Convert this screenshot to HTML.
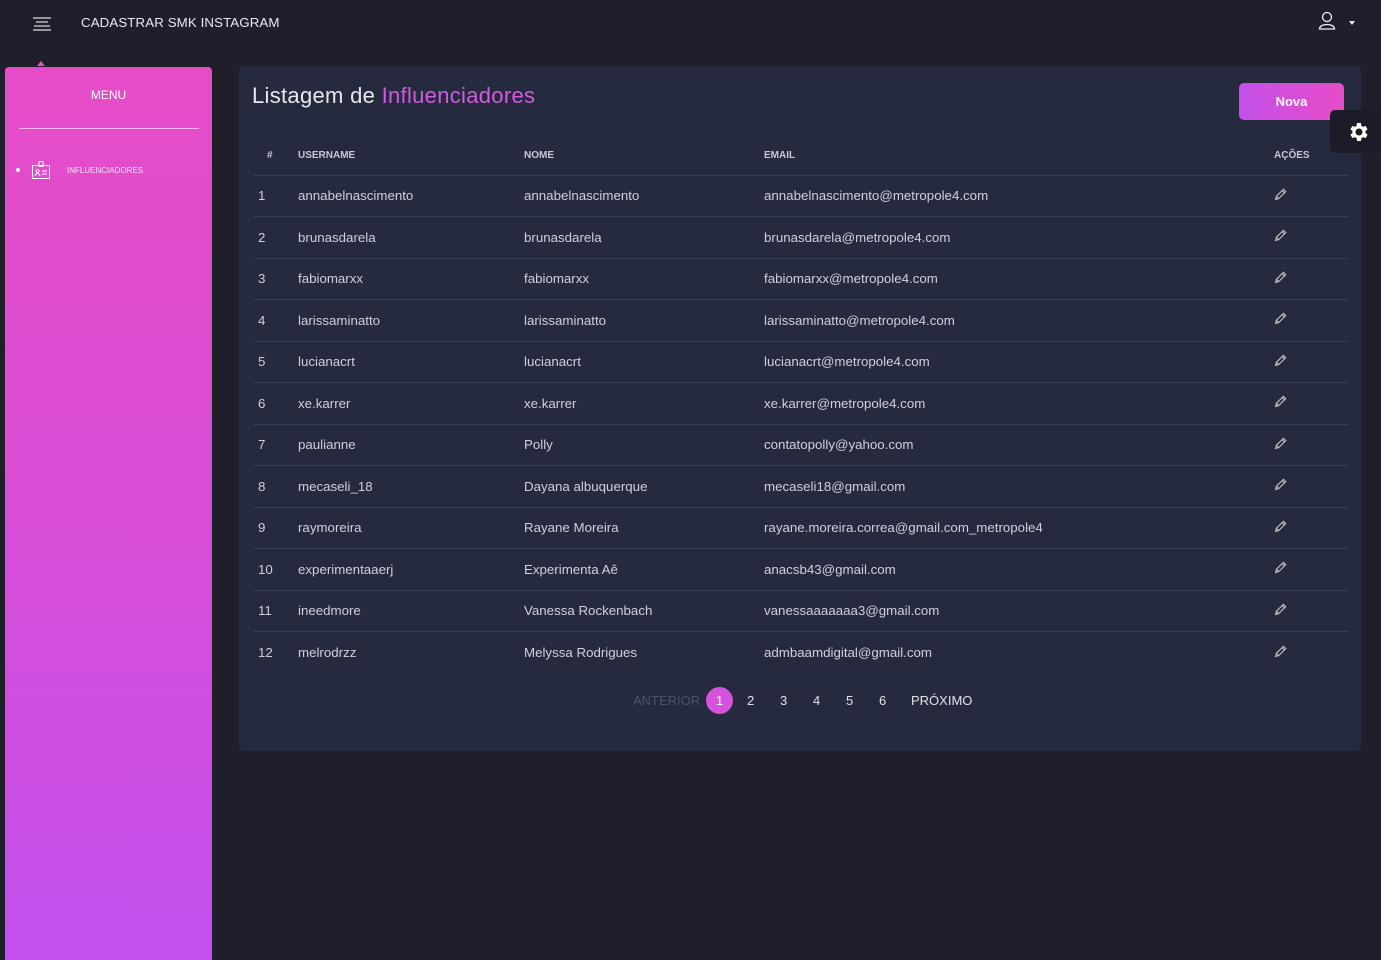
<!DOCTYPE html>
<html><head><meta charset="utf-8"><style>
*{margin:0;padding:0;box-sizing:border-box}
html,body{width:1381px;height:960px;overflow:hidden}
body{background:#1f1f2c;font-family:"Liberation Sans",sans-serif;color:#d8d8e0;position:relative}
.top{position:absolute;left:0;top:0;width:1381px;height:50px}
.title{position:absolute;left:81px;top:15px;font-size:13.3px;color:#e8e8ee;letter-spacing:.1px}
.side{position:absolute;left:5px;top:67px;width:207px;height:893px;border-radius:4px 4px 0 0;background:linear-gradient(180deg,#e64cc7 0%,#d84dd6 50%,#c350ee 100%)}
.side .menu{position:absolute;top:21px;width:100%;text-align:center;font-size:12px;color:#fff}
.side hr{position:absolute;left:14px;top:61px;width:180px;border:0;border-top:1px solid rgba(255,255,255,.6)}
.side .it{position:absolute;left:62px;top:99px;font-size:8px;color:#fff;opacity:.85}
.card{position:absolute;left:239px;top:66px;width:1122px;height:685px;background:#262a3e;border-radius:4px}
h1{position:absolute;left:13px;top:17px;font-weight:normal;font-size:22px;color:#e8e8ee;letter-spacing:.3px}
h1 span{color:#d25ae0}
.btn{position:absolute;left:1000px;top:17px;width:105px;height:37px;border-radius:5px;background:linear-gradient(90deg,#c450ea,#e64cc7);color:#fff;font-weight:bold;font-size:13px;text-align:center;line-height:37px}
.gear{position:absolute;left:1330px;top:110px;width:51px;height:43px;background:#1c1c28;border-radius:5px 0 0 5px}
table{position:absolute;left:14px;top:68px;width:1095px;border-collapse:collapse;font-size:13.3px}
th{height:41px;font-size:10px;font-weight:bold;color:#c8c8d4;text-align:left;border-bottom:1px solid #3a3e52;padding-top:3px}
td{height:41.5px;border-bottom:1px solid #3a3e52;color:#d0d0da}
tr:last-child td{border-bottom:0}
.pg{position:absolute;top:620px;left:0;width:100%;font-size:13px}
.pg span{position:absolute;top:7px;color:#e0e0e8}
</style></head><body>
<div class="top">
<svg style="position:absolute;left:33px;top:17px" width="18" height="15"><g stroke="#ddd" stroke-width="1.2"><line x1="0" y1="1" x2="18" y2="1"/><line x1="3" y1="5" x2="15" y2="5"/><line x1="1" y1="9" x2="17" y2="9"/><line x1="0" y1="13" x2="18" y2="13"/></g></svg>
<div class="title">CADASTRAR SMK INSTAGRAM</div>
<svg style="position:absolute;left:1318px;top:11px" width="18" height="19"><g fill="none" stroke="#eee" stroke-width="1.3"><circle cx="9" cy="6" r="4.5"/><path d="M1.5 18 C1.5 12 16.5 12 16.5 18 Z"/></g></svg>
<div style="position:absolute;left:1349px;top:21px;border:3px solid transparent;border-top:4px solid #eee"></div>
</div>
<div style="position:absolute;left:37px;top:61px;border:4px solid transparent;border-bottom:5px solid #e64cc7;border-top:0"></div>
<div class="side"><div class="menu">MENU</div><hr>
<div style="position:absolute;left:11px;top:101px;width:4px;height:4px;border-radius:50%;background:#fff"></div>
<svg style="position:absolute;left:27px;top:94px" width="18" height="18"><g fill="none" stroke="#fff" stroke-width="1"><rect x="0.5" y="4.5" width="17" height="13"/><rect x="7" y="0.5" width="4" height="5"/><circle cx="5.5" cy="10" r="1.5"/><path d="M3 15c0-3 5-3 5 0"/><line x1="10" y1="10" x2="15" y2="10"/><line x1="10" y1="13" x2="15" y2="13"/></g></svg>
<div class="it">INFLUENCIADORES</div></div>
<svg width="0" height="0" style="position:absolute"><defs><symbol id="p" viewBox="0 0 12 12"><g fill="none" stroke="#bbb" stroke-width="1.1"><path d="M1.5 10.5l.7-2.8 6.5-6.5 2.1 2.1-6.5 6.5z"/><line x1="7.5" y1="2.4" x2="9.6" y2="4.5"/><line x1="2.2" y1="7.7" x2="4.3" y2="9.8"/></g></symbol></defs></svg>
<div class="card">
<h1>Listagem de <span>Influenciadores</span></h1>
<div class="btn">Nova</div>
<table>
<tr><th style="width:45px;padding-left:14px">#</th><th style="width:226px">USERNAME</th><th style="width:240px">NOME</th><th style="width:510px">EMAIL</th><th>AÇÕES</th></tr>
<tr><td style="padding-left:5px">1</td><td>annabelnascimento</td><td>annabelnascimento</td><td>annabelnascimento@metropole4.com</td><td><svg width="13" height="13"><use href="#p"/></svg></td></tr>
<tr><td style="padding-left:5px">2</td><td>brunasdarela</td><td>brunasdarela</td><td>brunasdarela@metropole4.com</td><td><svg width="13" height="13"><use href="#p"/></svg></td></tr>
<tr><td style="padding-left:5px">3</td><td>fabiomarxx</td><td>fabiomarxx</td><td>fabiomarxx@metropole4.com</td><td><svg width="13" height="13"><use href="#p"/></svg></td></tr>
<tr><td style="padding-left:5px">4</td><td>larissaminatto</td><td>larissaminatto</td><td>larissaminatto@metropole4.com</td><td><svg width="13" height="13"><use href="#p"/></svg></td></tr>
<tr><td style="padding-left:5px">5</td><td>lucianacrt</td><td>lucianacrt</td><td>lucianacrt@metropole4.com</td><td><svg width="13" height="13"><use href="#p"/></svg></td></tr>
<tr><td style="padding-left:5px">6</td><td>xe.karrer</td><td>xe.karrer</td><td>xe.karrer@metropole4.com</td><td><svg width="13" height="13"><use href="#p"/></svg></td></tr>
<tr><td style="padding-left:5px">7</td><td>paulianne</td><td>Polly</td><td>contatopolly@yahoo.com</td><td><svg width="13" height="13"><use href="#p"/></svg></td></tr>
<tr><td style="padding-left:5px">8</td><td>mecaseli_18</td><td>Dayana albuquerque</td><td>mecaseli18@gmail.com</td><td><svg width="13" height="13"><use href="#p"/></svg></td></tr>
<tr><td style="padding-left:5px">9</td><td>raymoreira</td><td>Rayane Moreira</td><td>rayane.moreira.correa@gmail.com_metropole4</td><td><svg width="13" height="13"><use href="#p"/></svg></td></tr>
<tr><td style="padding-left:5px">10</td><td>experimentaaerj</td><td>Experimenta Aê</td><td>anacsb43@gmail.com</td><td><svg width="13" height="13"><use href="#p"/></svg></td></tr>
<tr><td style="padding-left:5px">11</td><td>ineedmore</td><td>Vanessa Rockenbach</td><td>vanessaaaaaaa3@gmail.com</td><td><svg width="13" height="13"><use href="#p"/></svg></td></tr>
<tr><td style="padding-left:5px">12</td><td>melrodrzz</td><td>Melyssa Rodrigues</td><td>admbaamdigital@gmail.com</td><td><svg width="13" height="13"><use href="#p"/></svg></td></tr>
</table>
<div class="pg">
<span style="left:394px;color:#4e5266">ANTERIOR</span>
<div style="position:absolute;left:467px;top:1px;width:27px;height:27px;border-radius:50%;background:#d452dc;color:#fff;text-align:center;line-height:27px">1</div>
<span style="left:508px">2</span><span style="left:541px">3</span><span style="left:574px">4</span><span style="left:607px">5</span><span style="left:640px">6</span><span style="left:672px">PRÓXIMO</span>
</div>
</div>
<div class="gear"><svg style="position:absolute;left:17px;top:10px" width="24" height="24" viewBox="0 0 24 24"><path fill="#fff" d="M19.4 13a7.5 7.5 0 000-2l2.1-1.6-2-3.5-2.5 1a7.6 7.6 0 00-1.7-1L15 3h-4l-.4 2.9a7.6 7.6 0 00-1.7 1l-2.5-1-2 3.5L6.5 11a7.5 7.5 0 000 2l-2.1 1.6 2 3.5 2.5-1a7.6 7.6 0 001.7 1L11 21h4l.4-2.9a7.6 7.6 0 001.7-1l2.5 1 2-3.5zM13 15.5a3.5 3.5 0 110-7 3.5 3.5 0 010 7z" transform="translate(-1 0)"/></svg></div>
</body></html>
